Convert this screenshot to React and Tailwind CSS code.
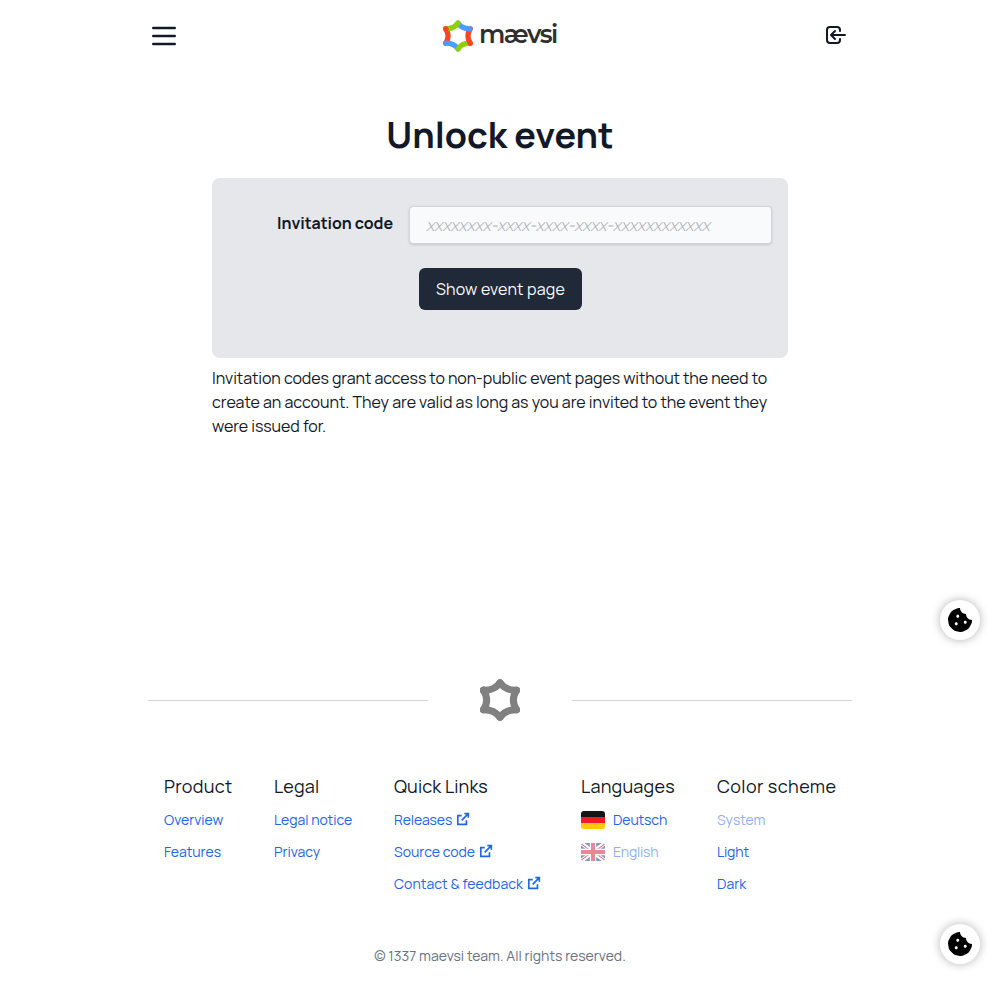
import { FaCookieBite } from "react-icons/fa";

const EDGES = [
  ["M3.5 11.3Q14.6 11.6 20 3.6", "#8fce0a"],
  ["M20 3.6Q25.4 11.6 36.5 11.3", "#4b9dfb"],
  ["M36.5 11.3Q30.2 21 36.5 30.7", "#fb4520"],
  ["M36.5 30.7Q25.4 30.4 20 38.4", "#8fce0a"],
  ["M20 38.4Q14.6 30.4 3.5 30.7", "#4b9dfb"],
  ["M3.5 30.7Q9.8 21 3.5 11.3", "#fb4520"],
];

function Star({ mono, className }) {
  const edges = [...EDGES].reverse();
  return (
    <svg viewBox="0 -0.5 40 43" className={className} fill="none" strokeWidth="7" strokeLinecap="round">
      {edges.map(([d, color]) => (
        <path key={d} d={d} stroke={mono || color} />
      ))}
      <path d="M3.9 11.9L3.5 11.3" stroke={mono || "#fb4520"} />
    </svg>
  );
}

function Icon({ d, className }) {
  return (
    <svg viewBox="0 0 24 24" className={className} fill="none" stroke="currentColor" strokeWidth="2" strokeLinecap="round" strokeLinejoin="round">
      <path d={d} />
    </svg>
  );
}

function External() {
  return (
    <svg viewBox="0 0 24 24" className="mb-0.5 ml-[3px] size-4 shrink-0" fill="none" stroke="currentColor" strokeWidth="2.5">
      <path d="M10 7H4.2v13h13v-6M14 4h6v6M20 4L10 14" />
    </svg>
  );
}

function Column({ title, titleClass = "", children }) {
  return (
    <div>
      <h2 className={`text-lg leading-7 whitespace-nowrap ${titleClass}`}>{title}</h2>
      <ul className="mt-1 text-sm text-[#2563eb]">{children}</ul>
    </div>
  );
}

function Item({ children, className = "", before, after }) {
  return (
    <li className="flex h-8 items-center whitespace-nowrap">
      {before}
      <a className={className}>{children}</a>
      {after}
    </li>
  );
}

function German() {
  return (
    <svg viewBox="0 0 24 18" className="mr-2 h-[18px] w-6 rounded-[3px]">
      <path fill="#151515" d="M0 0h24v6H0z" />
      <path fill="#ee1c25" d="M0 6h24v6H0z" />
      <path fill="#fecb00" d="M0 12h24v6H0z" />
    </svg>
  );
}

function British() {
  return (
    <svg viewBox="0 0 24 18" className="mr-2 h-[18px] w-6 rounded-[3px] opacity-50">
      <path fill="#0a3a87" d="M0 0h24v18H0z" />
      <path stroke="#fff" strokeWidth="4" d="M0 0l24 18M24 0L0 18" />
      <path stroke="#d8122d" strokeWidth="1.3" d="M0 .7l10 7.5M14 9.8l10 7.5M24 .7l-10 7.5M10 9.8L0 17.3" />
      <path stroke="#fff" strokeWidth="6.4" d="M12 0v18M0 9h24" />
      <path stroke="#d0142c" strokeWidth="4" d="M12 0v18M0 9h24" />
    </svg>
  );
}

function CookieButton({ className }) {
  return (
    <button
      aria-label="Cookies"
      className={`fixed right-5 flex size-10 items-center justify-center rounded-full bg-white text-black shadow-[0_0_10px_rgba(0,0,0,0.3)] ${className}`}
    >
      <FaCookieBite className="size-6" />
    </button>
  );
}

export default function App() {
  return (
    <div className="h-[984px] overflow-hidden bg-white font-['Manrope','Inter',sans-serif] text-[#111827]">
      <div className="mx-auto flex w-[704px] flex-col">
        <header className="flex h-[72px] items-center justify-between">
          <button aria-label="Menu" className="w-8">
            <Icon className="size-8" d="M4 6h16M4 12h16M4 18h16" />
          </button>
          <div className="mr-1 flex items-center text-[#2f2f2f]">
            <Star className="h-[32px] w-[30px]" />
            <span className="mb-1 ml-1.5 w-[78px] font-['Montserrat','Manrope',sans-serif] text-[25px] leading-8 font-semibold tracking-[-0.06em]">mævsi</span>
          </div>
          <button aria-label="Log in" className="mr-1 mb-0.5">
            <Icon
              className="size-6"
              d="M11 16l-4-4m0 0l4-4m-4 4h14m-5 4v1a3 3 0 01-3 3H6a3 3 0 01-3-3V7a3 3 0 013-3h7a3 3 0 013 3v1"
            />
          </button>
        </header>

        <main className="mx-auto mt-[43px] h-[563px] w-[576px]">
          <h1 className="text-center text-4xl leading-10 font-bold whitespace-nowrap">Unlock event</h1>
          <form className="mt-[23px] flex h-[180px] flex-col items-center rounded-lg bg-[#e5e7eb] px-4 pt-7">
            <div className="flex w-full">
              <label className="w-[165px] shrink-0 pt-[5px] text-right text-base font-bold tracking-[-0.06px] whitespace-nowrap">Invitation code</label>
              <input
                placeholder="xxxxxxxx-xxxx-xxxx-xxxx-xxxxxxxxxxxx"
                className="ml-4 h-[38px] w-[363px] shrink-0 rounded border border-[#d1d5db] bg-[#f9fafb] px-4 text-base tracking-[-0.2px] shadow-sm placeholder:font-light placeholder:text-[#aeb1b7] placeholder:italic"
              />
            </div>
            <button type="button" className="mt-6 ml-px h-[42px] w-[163px] rounded-md bg-[#1f2937] text-base tracking-[0.18px] whitespace-nowrap text-[#f9fafb]">
              Show event page
            </button>
          </form>
          <p className="mt-2 text-base leading-6 whitespace-nowrap">
            <span className="tracking-[-0.075px]">Invitation codes grant access to non-public event pages without the need to</span>
            <br />
            <span className="tracking-[-0.03px]">create an account. They are valid as long as you are invited to the event they</span>
            <br />
            <span className="tracking-[-0.05px]">were issued for.</span>
          </p>
        </main>

        <footer>
          <div className="flex h-[44px] items-center justify-between">
            <div className="h-px w-[280px] bg-[#d1d5db]" />
            <Star mono="#808080" className="h-11 w-10" />
            <div className="h-px w-[280px] bg-[#d1d5db]" />
          </div>
          <div className="mx-4 mt-[50px] grid h-32 grid-cols-[110px_120px_187px_136px_119px]">
            <Column title="Product" titleClass="tracking-[0.3px]">
              <Item>Overview</Item>
              <Item>Features</Item>
            </Column>
            <Column title="Legal" titleClass="tracking-[0.15px]">
              <Item className="tracking-[-0.05px]">Legal notice</Item>
              <Item>Privacy</Item>
            </Column>
            <Column title="Quick Links" titleClass="tracking-[0.1px]">
              <Item className="tracking-[-0.1px]" after={<External />}>Releases</Item>
              <Item after={<External />}>Source code</Item>
              <Item className="tracking-[0.05px]" after={<External />}>Contact &amp; feedback</Item>
            </Column>
            <Column title="Languages" titleClass="tracking-[0.22px]">
              <Item className="tracking-[-0.1px]" before={<German />}>Deutsch</Item>
              <Item before={<British />} className="tracking-[-0.2px] opacity-50">English</Item>
            </Column>
            <Column title="Color scheme" titleClass="tracking-[0.4px]">
              <Item className="opacity-50">System</Item>
              <Item className="tracking-[-0.15px]">Light</Item>
              <Item>Dark</Item>
            </Column>
          </div>
          <p className="mt-[46px] text-center text-sm text-[#6b7280]">© 1337 maevsi team. All rights reserved.</p>
        </footer>
      </div>
      <CookieButton className="top-[600px]" />
      <CookieButton className="top-[924px]" />
    </div>
  );
}
